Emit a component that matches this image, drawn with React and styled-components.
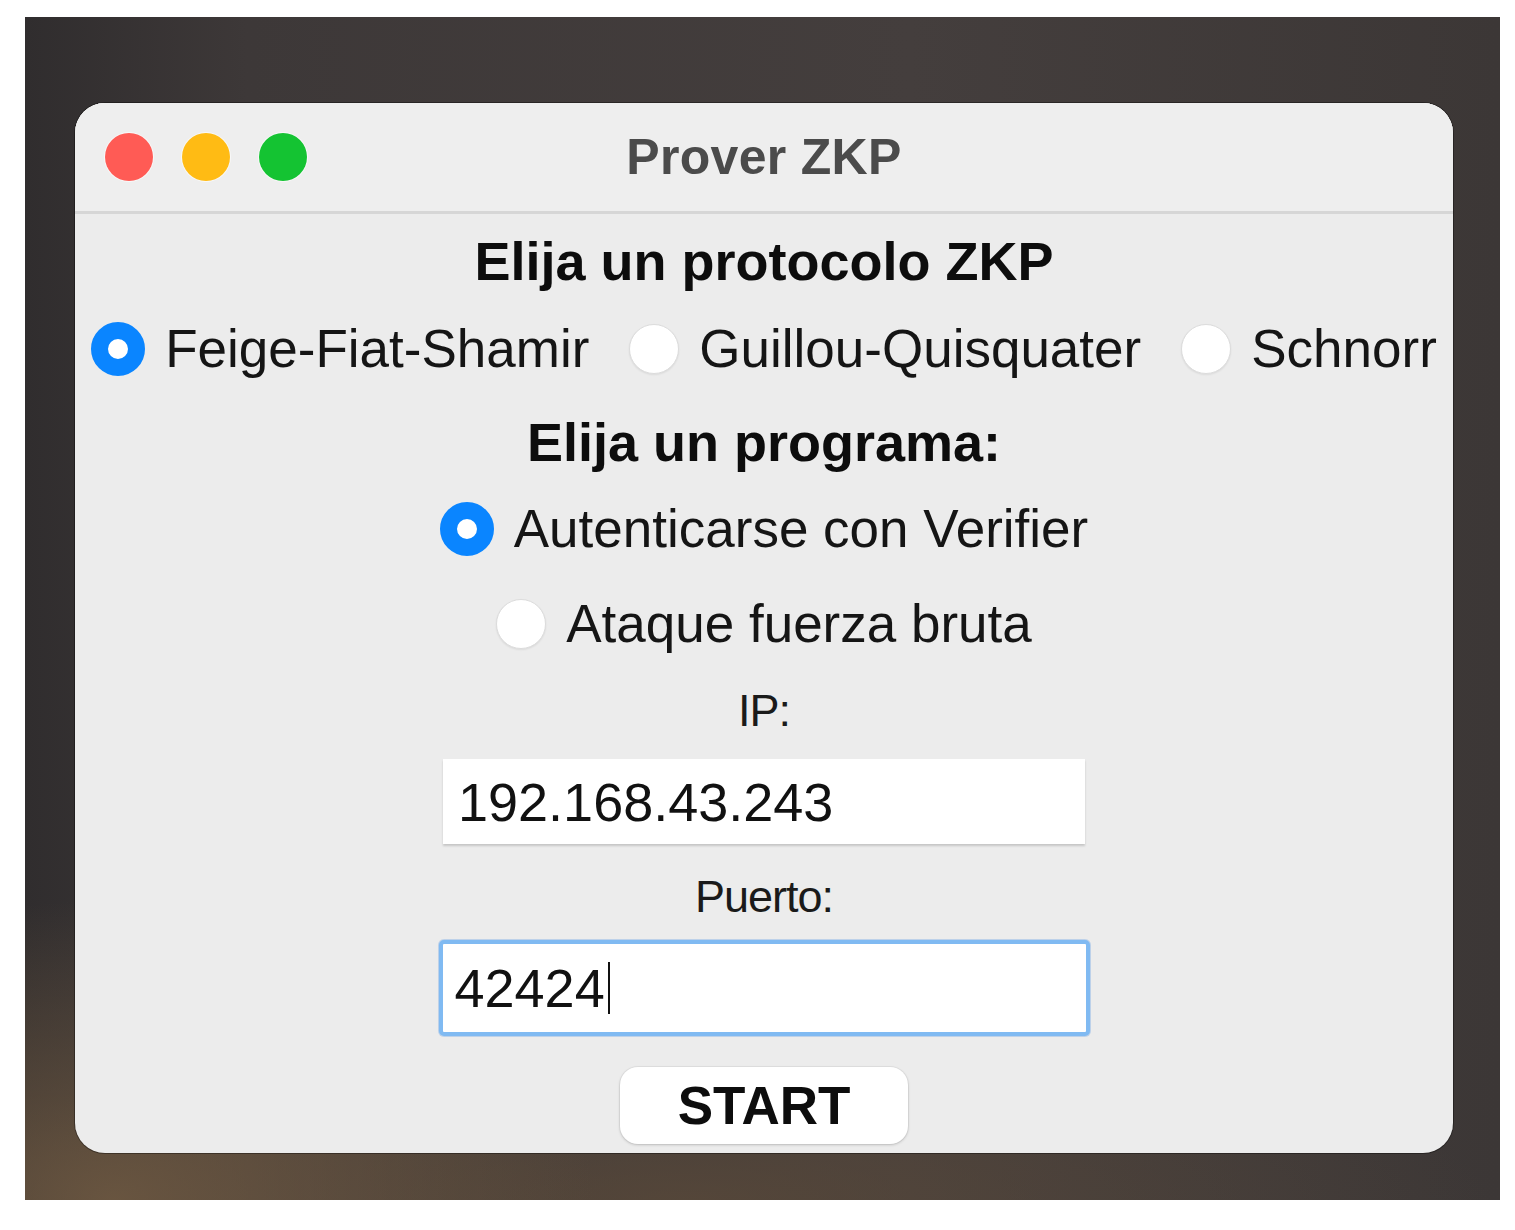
import React from 'react';
import styled, { createGlobalStyle } from 'styled-components';

const Global = createGlobalStyle`
  html, body {
    margin: 0;
    padding: 0;
    background: #ffffff;
  }
  body {
    font-family: "Liberation Sans", Arial, Helvetica, sans-serif;
  }
`;

const Page = styled.div`
  width: 1515px;
  height: 1230px;
  padding: 17px 0 0 25px;
  box-sizing: border-box;
`;

const Desktop = styled.div`
  width: 1475px;
  height: 1183px;
  padding: 86px 0 0 50px;
  box-sizing: border-box;
  background:
    radial-gradient(ellipse 480px 300px at 6% 100%, rgba(112, 90, 66, 0.85), rgba(112, 90, 66, 0) 100%),
    radial-gradient(ellipse 800px 160px at 45% 100%, rgba(92, 74, 56, 0.7), rgba(92, 74, 56, 0) 100%),
    linear-gradient(90deg, #302d2e 0%, #3d3838 15%, #443e3d 60%, #3c3736 100%);
`;

const Window = styled.div`
  width: 1378px;
  height: 1050px;
  background: #ececec;
  border-radius: 30px;
  overflow: hidden;
  box-shadow: 0 0 0 1px rgba(0, 0, 0, 0.35), inset 0 2px 0 rgba(255, 255, 255, 0.9);
  display: flex;
  flex-direction: column;
`;

const TitleBar = styled.div`
  height: 108px;
  flex-shrink: 0;
  display: grid;
  grid-template-columns: 1fr auto 1fr;
  align-items: center;
  padding: 0 30px;
  border-bottom: 3px solid #d6d6d6;
  background: #eeeeee;
`;

const Lights = styled.div`
  display: flex;
  gap: 29px;
  align-items: center;
`;

const Light = styled.span`
  width: 48px;
  height: 48px;
  border-radius: 50%;
  background: ${p => p.$color};
  box-shadow: 0 0 0 1px rgba(255, 255, 255, 0.6);
`;

const Title = styled.div`
  font-size: 50px;
  font-weight: 700;
  color: #4b4b4b;
  letter-spacing: 0.3px;
`;

const Content = styled.div`
  display: flex;
  flex-direction: column;
  align-items: center;
  padding-top: 17px;
`;

const Heading = styled.div`
  height: 60px;
  line-height: 60px;
  font-size: 54px;
  font-weight: 700;
  color: #0d0d0d;
  margin-top: ${p => p.$mt || 0}px;
`;

const RadioRow = styled.div`
  display: flex;
  align-items: center;
  gap: ${p => p.$gap || 40}px;
  height: 60px;
  margin-top: ${p => p.$mt || 0}px;
`;

const Option = styled.label`
  display: flex;
  align-items: center;
  gap: 20px;
  font-size: 53px;
  color: #151515;
  line-height: 60px;
`;

const RadioDot = styled.span`
  width: ${p => (p.$checked ? 54 : 50)}px;
  height: ${p => (p.$checked ? 54 : 50)}px;
  box-sizing: border-box;
  border-radius: 50%;
  flex-shrink: 0;
  background: #ffffff;
  border: ${p => (p.$checked ? '17px solid #0a85ff' : '1px solid #dcdcdc')};
  box-shadow: ${p => (p.$checked ? 'none' : '0 1px 2px rgba(0,0,0,0.08)')};
`;

const FieldLabel = styled.div`
  height: 50px;
  line-height: 50px;
  font-size: 45px;
  color: #1a1a1a;
  letter-spacing: -1px;
  margin-top: ${p => p.$mt || 0}px;
`;

const Field = styled.div`
  box-sizing: border-box;
  width: ${p => p.$w}px;
  height: ${p => p.$h}px;
  margin-top: ${p => p.$mt || 0}px;
  background: #ffffff;
  display: flex;
  align-items: center;
  padding-left: ${p => (p.$focused ? 12 : 15)}px;
  font-size: 54px;
  color: #111111;
  border: ${p => (p.$focused ? '4px solid #80baf2' : 'none')};
  border-radius: ${p => (p.$focused ? 5 : 0)}px;
  box-shadow: ${p => (p.$focused ? '0 0 0 1px rgba(120,170,230,0.4)' : '0 2px 2px rgba(0,0,0,0.16)')};
`;

const Caret = styled.span`
  display: inline-block;
  width: 2px;
  height: 52px;
  margin-left: 3px;
  background: #111111;
`;

const StartButton = styled.button`
  width: 288px;
  height: 77px;
  margin-top: 31px;
  border: none;
  border-radius: 18px;
  background: #ffffff;
  box-shadow: 0 1px 3px rgba(0, 0, 0, 0.18), 0 0 0 1px rgba(0, 0, 0, 0.04);
  font-family: "Liberation Sans", Arial, sans-serif;
  font-size: 53px;
  font-weight: 700;
  color: #0d0d0d;
  padding: 0;
`;

const App = () => {
  return (
    <>
      <Global />
      <Page>
        <Desktop>
          <Window>
            <TitleBar>
              <Lights>
                <Light $color="#ff5b55" />
                <Light $color="#ffbb14" />
                <Light $color="#14c332" />
              </Lights>
              <Title>Prover ZKP</Title>
              <div />
            </TitleBar>
            <Content>
              <Heading>Elija un protocolo ZKP</Heading>
              <RadioRow $mt={28} $gap={40}>
                <Option><RadioDot $checked />Feige-Fiat-Shamir</Option>
                <Option><RadioDot />Guillou-Quisquater</Option>
                <Option><RadioDot />Schnorr</Option>
              </RadioRow>
              <Heading $mt={33}>Elija un programa:</Heading>
              <RadioRow $mt={27}>
                <Option><RadioDot $checked />Autenticarse con Verifier</Option>
              </RadioRow>
              <RadioRow $mt={35}>
                <Option><RadioDot />Ataque fuerza bruta</Option>
              </RadioRow>
              <FieldLabel $mt={32}>IP:</FieldLabel>
              <Field $w={642} $h={85} $mt={23}>192.168.43.243</Field>
              <FieldLabel $mt={28}>Puerto:</FieldLabel>
              <Field $w={651} $h={96} $mt={18} $focused>
                42424<Caret />
              </Field>
              <StartButton>START</StartButton>
            </Content>
          </Window>
        </Desktop>
      </Page>
    </>
  );
};

export default App;
